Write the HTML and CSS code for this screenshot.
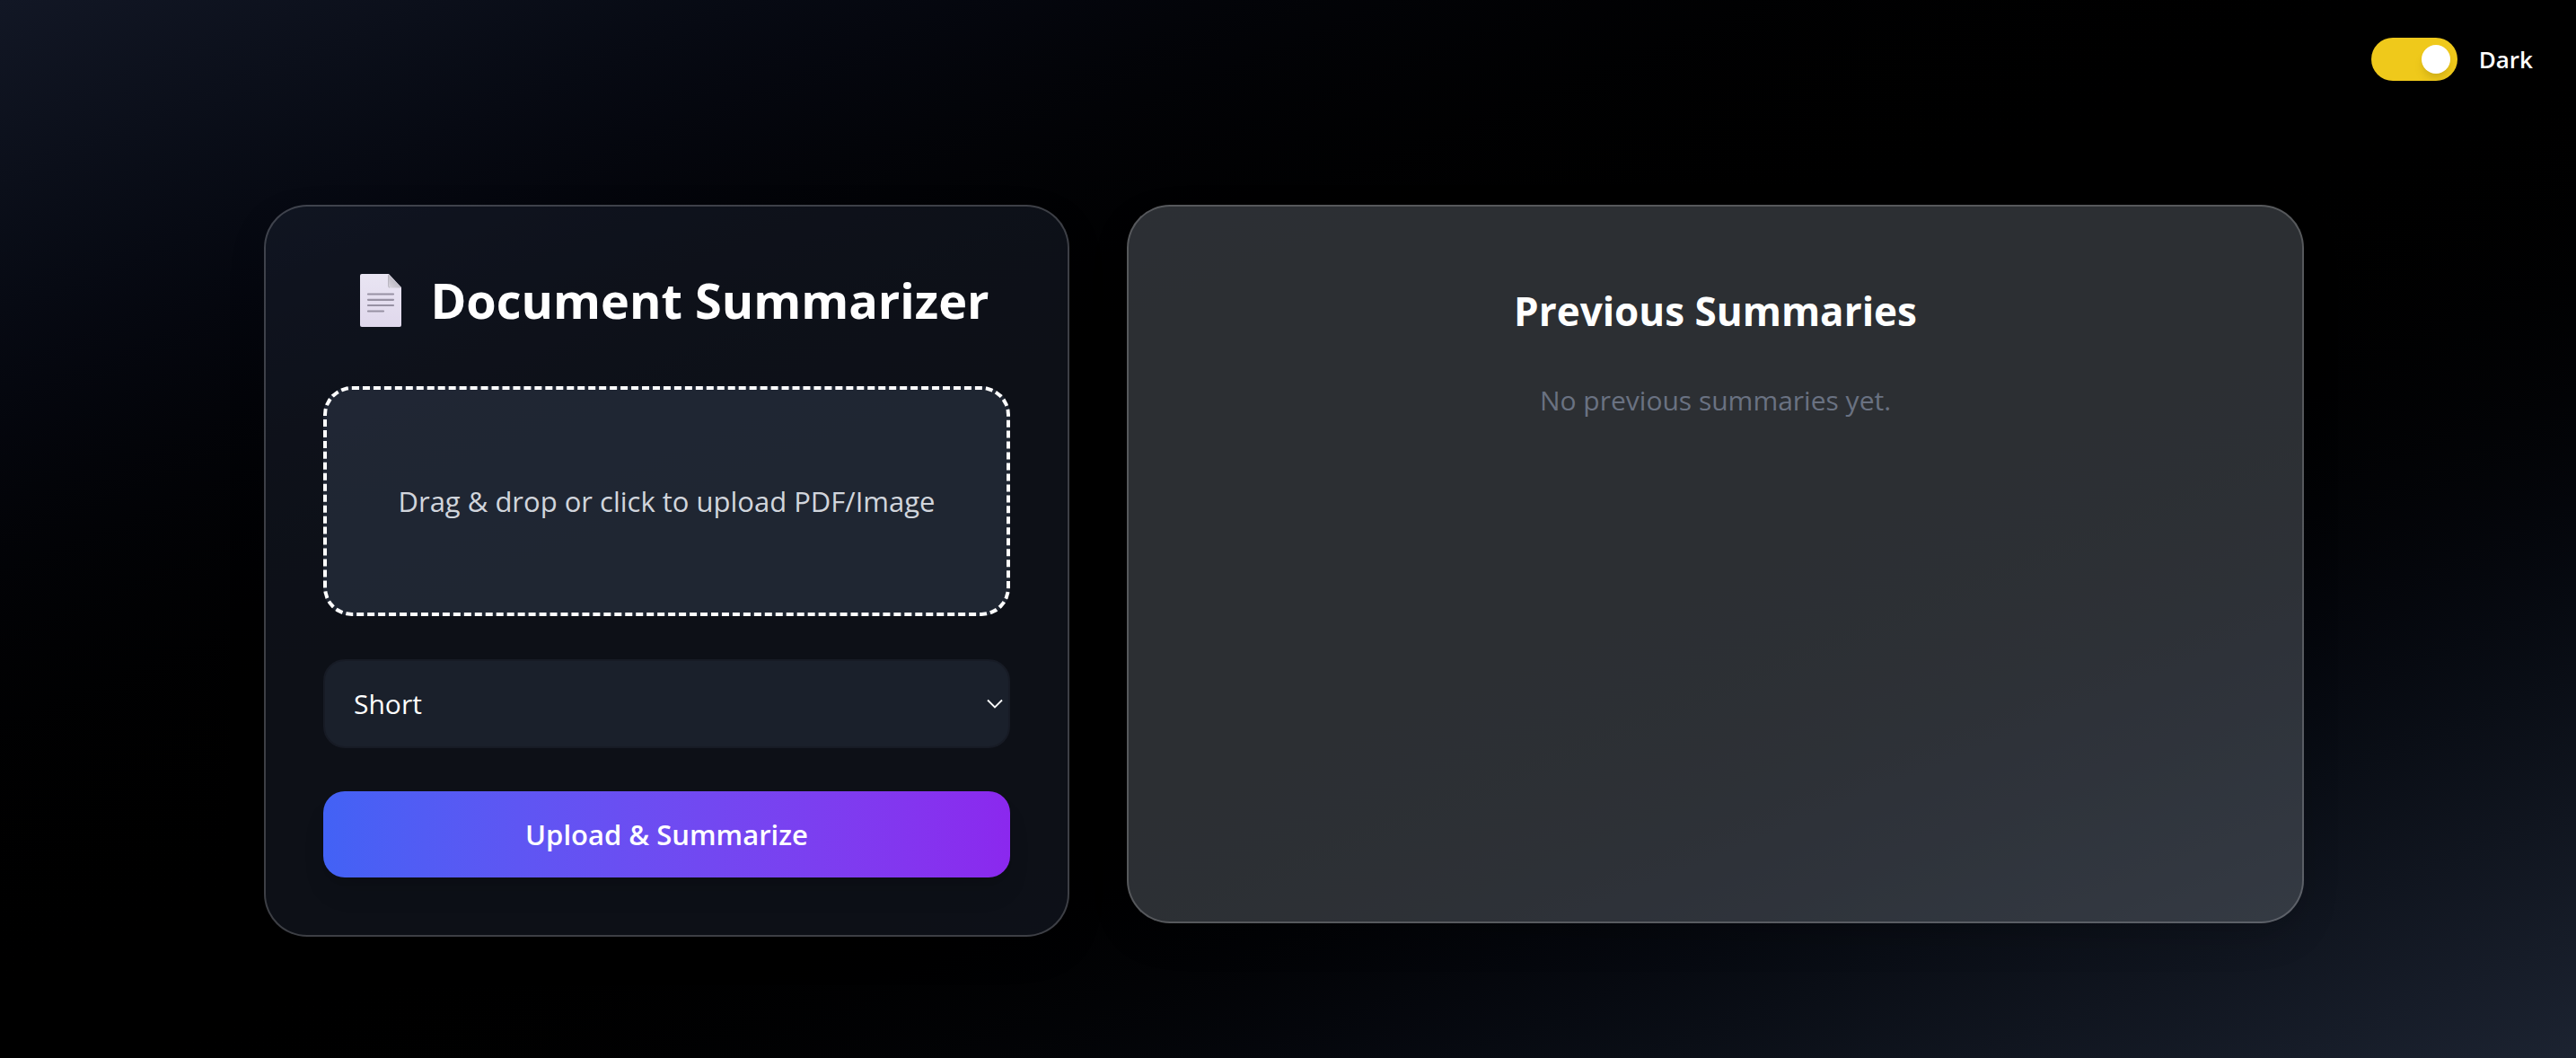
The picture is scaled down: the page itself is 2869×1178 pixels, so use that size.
FILE: index.html
```html
<!DOCTYPE html>
<html lang="en">
<head>
<meta charset="utf-8">
<meta name="viewport" content="width=device-width, initial-scale=1">
<title>Document Summarizer</title>
<link rel="stylesheet" href="styles.css">
</head>
<body>
<header class="topbar">
  <input class="switch" type="checkbox" id="theme" checked>
  <label class="switch-label" for="theme">Dark</label>
</header>
<main class="layout">
  <section class="card uploader">
    <h1 class="title">
      <svg class="title-icon" viewBox="-18 0 80 59" aria-hidden="true">
        <defs>
          <linearGradient id="sheet" x1="0" y1="0" x2="0" y2="1"><stop offset="0" stop-color="#e9e5f3"/><stop offset="1" stop-color="#e0d8ec"/></linearGradient>
          <linearGradient id="fold" x1="1" y1="0" x2="0" y2="1"><stop offset="0.4" stop-color="#b9b6c0"/><stop offset="1" stop-color="#dad6e0"/></linearGradient>
        </defs>
        <path d="M2 0H32L46 15V57a2 2 0 0 1-2 2H2a2 2 0 0 1-2-2V2a2 2 0 0 1 2-2z" fill="url(#sheet)"/>
        <path d="M31.500 0.500L46 15.500H33a1.500 1.500 0 0 1-1.500-1.500z" fill="url(#fold)"/>
        <path d="M31.500 1V13.500a1.500 1.500 0 0 0 1.500 1.500" fill="none" stroke="#aaa7b2" stroke-width="0.700"/>
        <path d="M9 22.500H37M9 28.800H37M9 35H37M9 41.500H26" stroke="#9791a3" stroke-width="2.200" stroke-linecap="round"/>
      </svg>
      <span>Document Summarizer</span>
    </h1>
    <label class="dropzone">
      <input class="file" type="file" accept="application/pdf,image/*">
      <span>Drag &amp; drop or click to upload PDF/Image</span>
    </label>
    <div class="select-wrap">
      <select class="select" aria-label="Summary length">
        <option>Short</option>
        <option>Medium</option>
        <option>Long</option>
      </select>
      <svg class="chevron" viewBox="0 0 18 12" aria-hidden="true"><path d="M1 1.500L9 9.500L17 1.500" fill="none" stroke="#fff" stroke-width="1.800"/></svg>
    </div>
    <button class="submit" type="button">Upload &amp; Summarize</button>
  </section>
  <section class="card history">
    <h2 class="subtitle">Previous Summaries</h2>
    <p class="empty">No previous summaries yet.</p>
  </section>
</main>
</body>
</html>
```
FILE: styles.css
```css
* { box-sizing: border-box; margin: 0; }

body {
  min-height: 100vh;
  font-family: "Open Sans", "Noto Sans", sans-serif;
  font-size: 31px;
  line-height: 48px;
  color: #fff;
  background: linear-gradient(to bottom right in oklab, #121725, #000, #1c2331);
}

.topbar {
  display: flex;
  justify-content: flex-end;
  align-items: center;
  gap: 24px;
  padding: 42px 48px 0;
}
.switch {
  appearance: none;
  width: 96px;
  height: 48px;
  padding: 8px;
  border-radius: 24px;
  background: #efc91b;
  cursor: pointer;
}
.switch::before {
  content: "";
  display: block;
  width: 32px;
  height: 32px;
  border-radius: 50%;
  background: #fff;
  box-shadow: 0 8px 12px -2px rgb(0 0 0 / 10%), 0 4px 8px -4px rgb(0 0 0 / 10%);
}
.switch:checked::before { margin-left: auto; }
.switch-label { font-size: 26px; font-weight: 600; }

.layout {
  display: grid;
  grid-template-columns: 897fr 1311fr;
  align-items: start;
  gap: 64px;
  padding: 138px 303px 64px 294px;
}
.card {
  border: 2px solid rgb(255 255 255 / 20%);
  border-radius: 48px;
  box-shadow: 0 16px 48px -12px rgb(0 0 0 / 25%);
}
.uploader {
  display: flex;
  flex-direction: column;
  gap: 48px;
  padding: 64px;
  background: rgb(30 37 54 / 43%);
}
.title {
  display: flex;
  justify-content: center;
  align-items: center;
  gap: 16px;
  padding-bottom: 8px;
  font-size: 54px;
  line-height: 80px;
  font-weight: 700;
  white-space: nowrap;
}
.title-icon { width: 80px; height: 59px; flex: none; }

.dropzone {
  display: flex;
  justify-content: center;
  align-items: center;
  height: 256px;
  border: 4px dashed #fff;
  border-radius: 32px;
  background: rgb(49 59 77 / 50%);
  color: #d1d5dc;
  cursor: pointer;
}
.file {
  position: absolute;
  width: 1px;
  height: 1px;
  opacity: 0;
}

.select-wrap { display: grid; align-items: center; }
.select-wrap > * { grid-area: 1 / 1; }
.select {
  appearance: none;
  width: 100%;
  height: 99px;
  padding: 0 32px;
  border: 2px solid #171b25;
  border-radius: 24px;
  background: #1a202b;
  color: #fff;
  font: inherit;
  font-size: 30px;
}
.chevron {
  justify-self: end;
  width: 18px;
  height: 12px;
  margin-right: 8px;
  pointer-events: none;
}
.submit {
  height: 96px;
  border: 0;
  border-radius: 24px;
  background: linear-gradient(to right in oklab, #4262f5, #8b28ee);
  box-shadow: 0 20px 30px -6px rgb(0 0 0 / 10%), 0 8px 12px -8px rgb(0 0 0 / 10%);
  color: #fff;
  font: inherit;
  font-weight: 600;
  cursor: pointer;
}

.history {
  min-height: 800px;
  padding: 80px 64px;
  background: rgb(97 104 114 / 45%);
  text-align: center;
}
.subtitle {
  margin-bottom: 40px;
  font-size: 44px;
  line-height: 72px;
  font-weight: 700;
}
.empty { font-size: 30px; color: #6a7282; }
```
